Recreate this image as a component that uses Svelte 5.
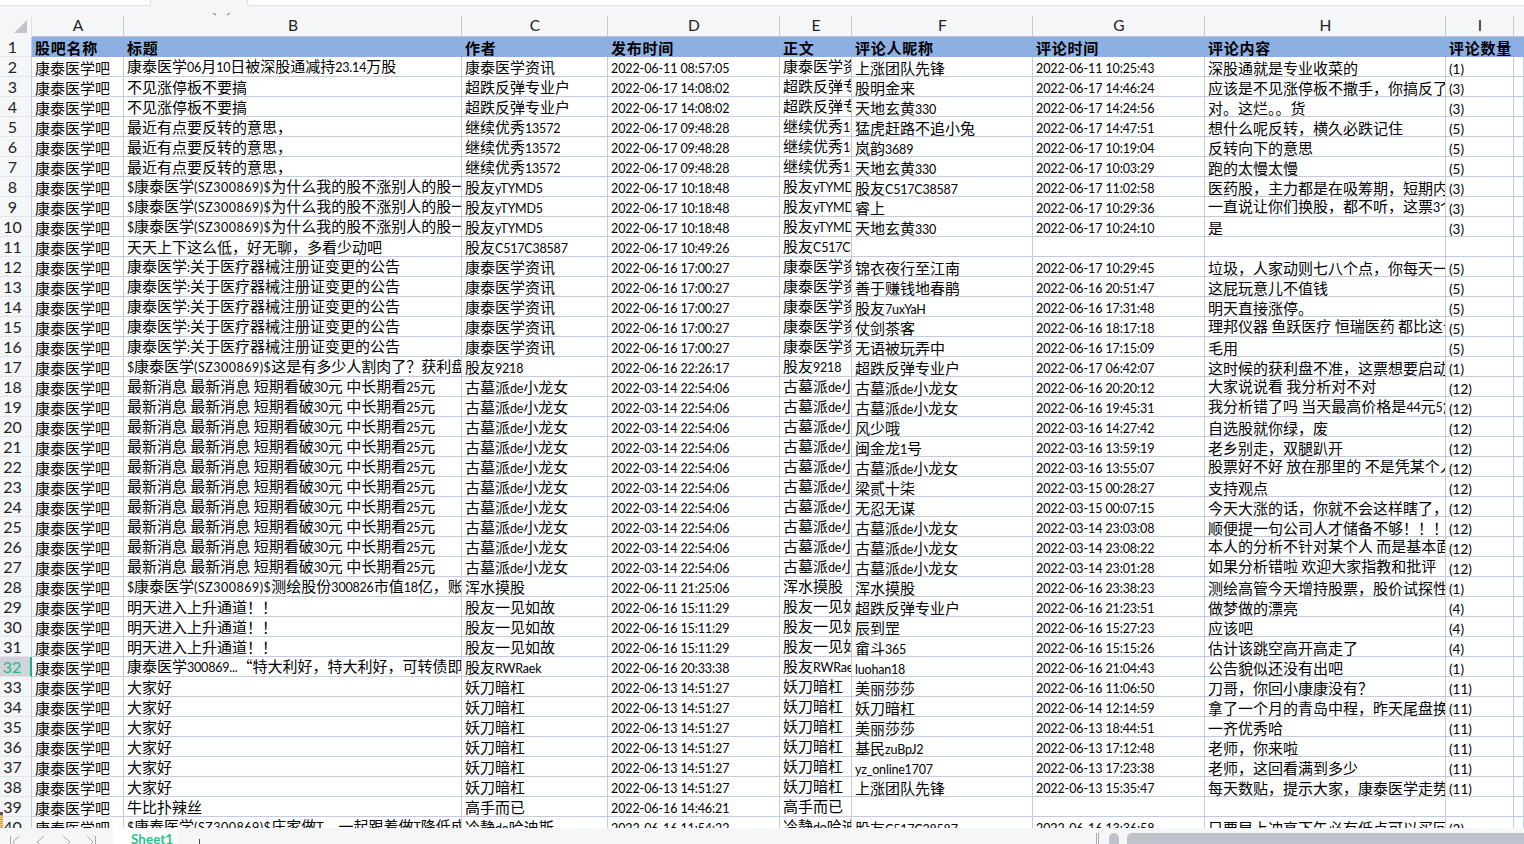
<script>
  const T1 = '$康泰医学(SZ300869)$为什么我的股不涨别人的股一直涨';
  const T2 = '康泰医学:关于医疗器械注册证变更的公告';
  const T3 = '最新消息 最新消息 短期看破30元 中长期看25元';
  const T4 = '明天进入上升通道！！';
  const T5 = '最近有点要反转的意思，';
  const T6 = '不见涨停板不要搞';
  const GM = '古墓派de小龙女';
  const D3 = '2022-03-14 22:54:06';
  const D4 = '2022-06-16 17:00:27';
  const D5 = '2022-06-13 14:51:27';
  // title, author, published, nickname, comment time, comment, count, raised cells
  const data = [
    ['康泰医学06月10日被深股通减持23.14万股','康泰医学资讯','2022-06-11 08:57:05','上涨团队先锋','2022-06-11 10:25:43','深股通就是专业收菜的','(1)','b'],
    [T6,'超跌反弹专业户','2022-06-17 14:08:02','股明金来','2022-06-17 14:46:24','应该是不见涨停板不撒手，你搞反了','(3)'],
    [T6,'超跌反弹专业户','2022-06-17 14:08:02','天地玄黄330','2022-06-17 14:24:56','对。这烂。。货','(3)'],
    [T5,'继续优秀13572','2022-06-17 09:48:28','猛虎赶路不追小兔','2022-06-17 14:47:51','想什么呢反转，横久必跌记住','(5)'],
    [T5,'继续优秀13572','2022-06-17 09:48:28','岚韵3689','2022-06-17 10:19:04','反转向下的意思','(5)'],
    [T5,'继续优秀13572','2022-06-17 09:48:28','天地玄黄330','2022-06-17 10:03:29','跑的太慢太慢','(5)'],
    [T1,'股友yTYMD5','2022-06-17 10:18:48','股友C517C38587','2022-06-17 11:02:58','医药股，主力都是在吸筹期，短期内不会涨','(3)','b'],
    [T1,'股友yTYMD5','2022-06-17 10:18:48','睿上','2022-06-17 10:29:36','一直说让你们换股，都不听，这票3个月','(3)','bh'],
    [T1,'股友yTYMD5','2022-06-17 10:18:48','天地玄黄330','2022-06-17 10:24:10','是','(3)','b'],
    ['天天上下这么低，好无聊，多看少动吧','股友C517C38587','2022-06-17 10:49:26','','','',''],
    [T2,'康泰医学资讯',D4,'锦衣夜行至江南','2022-06-17 10:29:45','垃圾，人家动则七八个点，你每天一点','(5)','b'],
    [T2,'康泰医学资讯',D4,'善于赚钱地春鹃','2022-06-16 20:51:47','这屁玩意儿不值钱','(5)','b'],
    [T2,'康泰医学资讯',D4,'股友7uxYaH','2022-06-16 17:31:48','明天直接涨停。','(5)','b'],
    [T2,'康泰医学资讯',D4,'仗剑茶客','2022-06-16 18:17:18','理邦仪器 鱼跃医疗 恒瑞医药 都比这个好','(5)','bh'],
    [T2,'康泰医学资讯',D4,'无语被玩弄中','2022-06-16 17:15:09','毛用','(5)','b'],
    ['$康泰医学(SZ300869)$这是有多少人割肉了？获利盘不足','股友9218','2022-06-16 22:26:17','超跌反弹专业户','2022-06-17 06:42:07','这时候的获利盘不准，这票想要启动','(1)','b'],
    [T3,GM,D3,GM,'2022-06-16 20:20:12','大家说说看 我分析对不对','(12)','bh'],
    [T3,GM,D3,GM,'2022-06-16 19:45:31','我分析错了吗 当天最高价格是44元5角','(12)','bh'],
    [T3,GM,D3,'风少哦','2022-03-16 14:27:42','自选股就你绿，废','(12)','b'],
    [T3,GM,D3,'闽金龙1号','2022-03-16 13:59:19','老乡别走，双腿趴开','(12)','b'],
    [T3,GM,D3,GM,'2022-03-16 13:55:07','股票好不好 放在那里的 不是凭某个人','(12)','bh'],
    [T3,GM,D3,'梁贰十柒','2022-03-15 00:28:27','支持观点','(12)','b'],
    [T3,GM,D3,'无忍无谋','2022-03-15 00:07:15','今天大涨的话，你就不会这样瞎了，','(12)','b'],
    [T3,GM,D3,GM,'2022-03-14 23:03:08','顺便提一句公司人才储备不够！！！','(12)','b'],
    [T3,GM,D3,GM,'2022-03-14 23:08:22','本人的分析不针对某个人 而是基本面','(12)','bh'],
    [T3,GM,D3,GM,'2022-03-14 23:01:28','如果分析错啦 欢迎大家指教和批评','(12)','bh'],
    ['$康泰医学(SZ300869)$测绘股份300826市值18亿，账上现金','浑水摸股','2022-06-11 21:25:06','浑水摸股','2022-06-16 23:38:23','测绘高管今天增持股票，股价试探性','(1)','b'],
    [T4,'股友一见如故','2022-06-16 15:11:29','超跌反弹专业户','2022-06-16 21:23:51','做梦做的漂亮','(4)'],
    [T4,'股友一见如故','2022-06-16 15:11:29','辰到罡','2022-06-16 15:27:23','应该吧','(4)'],
    [T4,'股友一见如故','2022-06-16 15:11:29','畲斗365','2022-06-16 15:15:26','估计该跳空高开高走了','(4)'],
    ['康泰医学300869...“特大利好，特大利好，可转债即将','股友RWRaek','2022-06-16 20:33:38','luohan18','2022-06-16 21:04:43','公告貌似还没有出吧','(1)','b'],
    ['大家好','妖刀暗杠',D5,'美丽莎莎','2022-06-16 11:06:50','刀哥，你回小康康没有？','(11)'],
    ['大家好','妖刀暗杠',D5,'妖刀暗杠','2022-06-14 12:14:59','拿了一个月的青岛中程，昨天尾盘换','(11)'],
    ['大家好','妖刀暗杠',D5,'美丽莎莎','2022-06-13 18:44:51','一齐优秀哈','(11)'],
    ['大家好','妖刀暗杠',D5,'基民zuBpJ2','2022-06-13 17:12:48','老师，你来啦','(11)'],
    ['大家好','妖刀暗杠',D5,'yz_online1707','2022-06-13 17:23:38','老师，这回看满到多少','(11)'],
    ['大家好','妖刀暗杠',D5,'上涨团队先锋','2022-06-13 15:35:47','每天数贴，提示大家，康泰医学走势','(11)'],
    ['牛比扑辣丝','高手而已','2022-06-16 14:46:21','','','',''],
    ['$康泰医学(SZ300869)$庄家做T，一起跟着做T降低成本','冷静do哈迪斯','2022-06-16 11:54:22','股友C517C38587','2022-06-16 13:36:58','只要早上冲高下午必有低点可以买回','(2)','b']
  ];
  const letters = ['A','B','C','D','E','F','G','H','I',''];
  const heads = ['股吧名称','标题','作者','发布时间','正文','评论人昵称','评论时间','评论内容','评论数量',''];

  function kind(t) {
    if (/^\d{4}-\d\d-\d\d/.test(t)) return 'lat date';
    if (/^\(\d+\)$/.test(t)) return 'lat count';
    if (/^\(SZ/.test(t)) return 'lat code';
    return 'lat';
  }
  function runs(text) {
    return text.split(/([\x21-\x7e]+(?: [\x21-\x7e]+)*)/).filter(Boolean).map((t) => ({
      t,
      cls: /^[\x21-\x7e]/.test(t) ? kind(t) : ''
    }));
  }
  const rows = data.map((r, i) => {
    const raised = r[7] || '';
    return {
      n: i + 2,
      cells: [
        { t: '康泰医学吧' },
        { t: r[0], up: raised.includes('b'), mid: !raised.includes('b') },
        { t: r[1], mid: true },
        { t: r[2], mid: true },
        { t: r[1], up: true },
        { t: r[3] },
        { t: r[4], mid: true },
        { t: r[5], up: raised.includes('h') },
        { t: r[6] },
        { t: '' }
      ]
    };
  });
</script>

<div class="app">
  <div class="formula">
    <div class="box first"></div>
    <div class="fx"><svg width="97" height="6" viewBox="0 0 97 6"><path d="M62 0q1 1 3 2M76 2q2-1 3-2" fill="none" stroke="#666" /></svg></div>
    <div class="box second"></div>
  </div>
  <div class="gap"></div>

  <div class="grid colhead">
    <div class="corner"><svg width="31" height="20" viewBox="0 0 31 20"><path d="M27 4V17H14Z" fill="#c2c4c8" /></svg></div>
    {#each letters as l}
      <div class="col">{l}</div>
    {/each}
  </div>

  <div class="sheet">
    <div class="grid row headrow">
      <div class="rn">1</div>
      {#each heads as h}
        <div class="cell hd">{h}</div>
      {/each}
    </div>
    {#each rows as row}
      <div class="grid row">
        <div class="rn" class:active={row.n === 32}>{row.n}</div>
        {#each row.cells as c}
          <div class="cell" class:up={c.up} class:mid={c.mid}>{#each runs(c.t) as r}{#if r.cls}<span class={r.cls}>{r.t}</span>{:else}{r.t}{/if}{/each}</div>
        {/each}
      </div>
    {/each}
    <div class="sliver"></div>
  </div>

  <div class="tabbar">
    <div class="nav">
      <svg width="113" height="16" viewBox="0 0 113 16">
        <g fill="none" stroke="#a6a9b0" stroke-width="1">
          <path d="M10.500 5V17M19 5L13 11L19 17" />
          <path d="M44 5L37 11L44 17" />
          <path d="M63 5L70 11L63 17" />
          <path d="M87 5L93 11L87 17M95.500 5V17" />
        </g>
      </svg>
    </div>
    <div class="tab">Sheet1</div>
    <div class="plus"><svg width="14" height="14" viewBox="0 0 14 14"><path d="M7.500 1V14M1 7.500H14" stroke="#444852" stroke-width="1" fill="none" /></svg></div>
    <div class="spacer"></div>
    <div class="split"></div>
    <div class="sbtn"><svg width="10" height="11" viewBox="0 0 10 11"><path d="M6.500 3V8L3.500 5.500Z" fill="#83868f" /></svg></div>
    <div class="thumb"></div>
  </div>
</div>

<style>
  :global(body) {
    margin: 0;
    background: #f5f6f8;
  }
  .app {
    width: 1524px;
    height: 844px;
    display: flex;
    flex-direction: column;
    overflow: hidden;
    background: #f5f6f8;
    font-family: "Noto Sans CJK SC", "Noto Sans", sans-serif;
    color: #000;
  }
  .formula {
    height: 6px;
    display: flex;
    flex: none;
  }
  .box {
    height: 5px;
    background: #fff;
    border-bottom: 1px solid #dcdfe6;
  }
  .first {
    width: 150px;
    border-right: 1px solid #dcdfe6;
    border-radius: 0 0 3px 0;
  }
  .fx {
    width: 96px;
  }
  .second {
    flex: 1;
    border-left: 1px solid #dcdfe6;
    border-radius: 0 0 0 3px;
  }
  .gap {
    height: 10px;
    flex: none;
  }
  .grid {
    display: grid;
    grid-template-columns: 32px 92px 338px 146px 172px 72px 181px 172px 241px 68px 10px;
  }
  .colhead {
    height: 21px;
    flex: none;
  }
  .corner {
    height: 20px;
    border-right: 1px solid #dfe1e6;
    box-sizing: border-box;
  }
  .col {
    height: 21px;
    box-sizing: border-box;
    border-right: 1px solid #c6cad6;
    border-bottom: 1px solid #b9bfd0;
    text-align: center;
    font: 15.500px/19px Lato, sans-serif;
    color: #222;
    padding-left: 1px;
  }
  .col:last-child {
    border-right: 0;
  }
  .sheet {
    flex: 1;
    min-height: 0;
    overflow: hidden;
    position: relative;
  }
  .row {
    height: 20px;
  }
  .rn {
    height: 20px;
    box-sizing: border-box;
    padding-right: 6px;
    text-align: center;
    font: 16px/20px Lato, sans-serif;
    color: #222;
    border-right: 1px solid #c4cadb;
    border-bottom: 1px solid #e2e4ea;
  }
  .rn.active {
    background: #d0d4da;
    color: #23b67d;
    border-right: 2px solid #1db37a;
  }
  .cell {
    height: 20px;
    box-sizing: border-box;
    padding: 0 0 0 3px;
    background: #fff;
    border-right: 1px solid #c3cbe0;
    border-bottom: 1px solid #c3cbe0;
    font-size: 15px;
    line-height: 21px;
    white-space: nowrap;
    overflow: hidden;
  }
  .cell.mid {
    line-height: 20px;
  }
  .cell.up {
    line-height: 17px;
  }
  .lat {
    font-family: Lato, sans-serif;
    font-size: 12.500px;
    letter-spacing: -0.200px;
  }
  .date {
    font-size: 12.500px;
    letter-spacing: -0.100px;
  }
  .count {
    font-size: 13.500px;
    letter-spacing: 0;
  }
  .code {
    letter-spacing: 0.500px;
  }
  .cell.hd {
    background: #8db0e2;
    border: 0;
    font-weight: 700;
    line-height: 22px;
    letter-spacing: 0.750px;
  }
  .sliver {
    position: absolute;
    left: 0;
    bottom: 0;
    width: 3px;
    height: 16px;
    background: repeating-linear-gradient(#e69a3a 0 1px, #f5cf8e 1px 2px);
    border-top: 3px solid #555;
    box-sizing: border-box;
  }
  .tabbar {
    height: 16px;
    flex: none;
    display: flex;
    overflow: hidden;
    background: #f5f6f8;
  }
  .nav {
    width: 113px;
    height: 16px;
  }
  .tab {
    width: 46px;
    height: 16px;
    padding-left: 18px;
    background: #fff;
    color: #2bc38a;
    font: 700 13.500px/22px Lato, sans-serif;
  }
  .plus {
    margin: 5px 0 0 15px;
  }
  .spacer {
    flex: 1;
  }
  .split {
    width: 1px;
    height: 11px;
    margin-top: 5px;
    border-left: 1px solid #a9adb5;
    border-right: 1px solid #a9adb5;
  }
  .sbtn {
    width: 10px;
    height: 11px;
    margin: 5px 8px 0 10px;
    border-radius: 5px 5px 0 0;
    background: #c0c3cc;
  }
  .thumb {
    width: 397px;
    height: 11px;
    margin-top: 5px;
    background: #c0c3cc;
    border-radius: 5px 0 0 0;
  }
</style>
